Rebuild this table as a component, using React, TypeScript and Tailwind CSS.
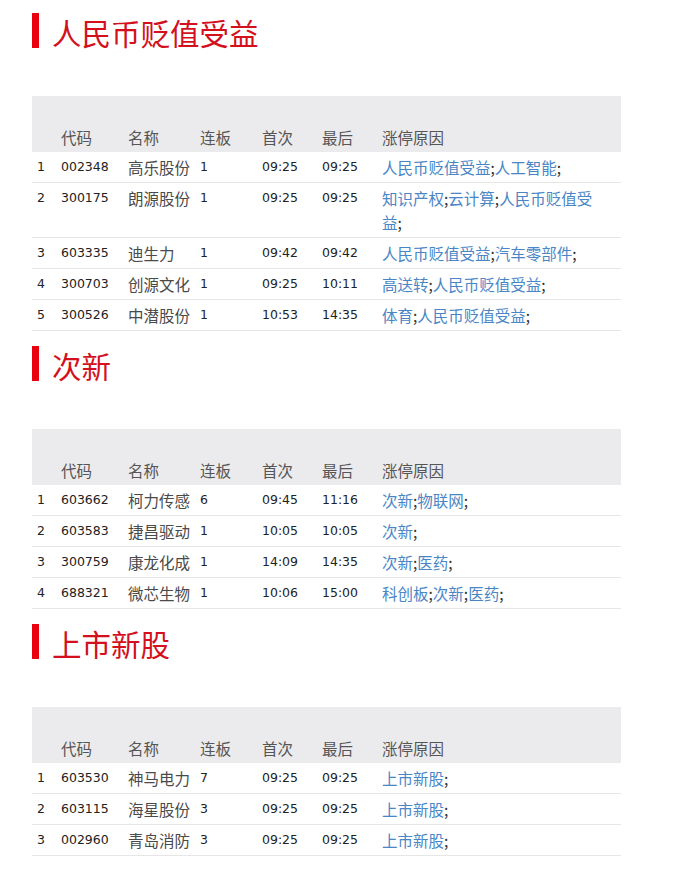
import React from "react";

type Row = {
  idx: string;
  code: string;
  name: string;
  lb: string;
  first: string;
  last: string;
  reasons: string[][];
};

const sections: { title: string; rows: Row[] }[] = [
  {
    title: "人民币贬值受益",
    rows: [
      { idx: "1", code: "002348", name: "高乐股份", lb: "1", first: "09:25", last: "09:25", reasons: [["人民币贬值受益", "人工智能"]] },
      { idx: "2", code: "300175", name: "朗源股份", lb: "1", first: "09:25", last: "09:25", reasons: [["知识产权", "云计算", "人民币贬值受|益"]] },
      { idx: "3", code: "603335", name: "迪生力", lb: "1", first: "09:42", last: "09:42", reasons: [["人民币贬值受益", "汽车零部件"]] },
      { idx: "4", code: "300703", name: "创源文化", lb: "1", first: "09:25", last: "10:11", reasons: [["高送转", "人民币贬值受益"]] },
      { idx: "5", code: "300526", name: "中潜股份", lb: "1", first: "10:53", last: "14:35", reasons: [["体育", "人民币贬值受益"]] },
    ],
  },
  {
    title: "次新",
    rows: [
      { idx: "1", code: "603662", name: "柯力传感", lb: "6", first: "09:45", last: "11:16", reasons: [["次新", "物联网"]] },
      { idx: "2", code: "603583", name: "捷昌驱动", lb: "1", first: "10:05", last: "10:05", reasons: [["次新"]] },
      { idx: "3", code: "300759", name: "康龙化成", lb: "1", first: "14:09", last: "14:35", reasons: [["次新", "医药"]] },
      { idx: "4", code: "688321", name: "微芯生物", lb: "1", first: "10:06", last: "15:00", reasons: [["科创板", "次新", "医药"]] },
    ],
  },
  {
    title: "上市新股",
    rows: [
      { idx: "1", code: "603530", name: "神马电力", lb: "7", first: "09:25", last: "09:25", reasons: [["上市新股"]] },
      { idx: "2", code: "603115", name: "海星股份", lb: "3", first: "09:25", last: "09:25", reasons: [["上市新股"]] },
      { idx: "3", code: "002960", name: "青岛消防", lb: "3", first: "09:25", last: "09:25", reasons: [["上市新股"]] },
    ],
  },
];

const grid = "grid grid-cols-[24px_67px_72px_62px_60px_60px_1fr]";
const num = "font-['DejaVu_Sans',sans-serif] text-[12.5px] text-[#222] leading-[24px] h-[24px]";
const cjk = "font-['Noto_Sans_CJK_SC',sans-serif] text-[15.5px] leading-[24px]";

function Reason({ items }: { items: string[] }) {
  const out: React.ReactNode[] = [];
  items.forEach((it, i) => {
    if (it.includes("|")) {
      const [a, b] = it.split("|");
      out.push(
        <span key={i + "a"} className="text-[#4a86c6]">
          {a}
        </span>
      );
      out.push(<br key={i + "br"} />);
      out.push(
        <span key={i + "b"} className="text-[#4a86c6]">
          {b}
        </span>
      );
    } else {
      out.push(
        <span key={i} className="text-[#4a86c6]">
          {it}
        </span>
      );
    }
    out.push(
      <span key={i + "s"} className="text-[#333]">
        ;
      </span>
    );
  });
  return <>{out}</>;
}

function Section({ title, rows, first }: { title: string; rows: Row[]; first?: boolean }) {
  return (
    <div className={first ? "pt-[13px]" : "pt-[15px]"}>
      <div className="flex items-center h-[35px]">
        <div className="w-[7px] h-[35px] bg-[#e8000e]" />
        <div className="ml-[13px] font-['Noto_Sans_CJK_SC',serif] text-[29.5px] leading-[35px] text-[#d3101c] pt-[4px]">
          {title}
        </div>
      </div>
      <div className="mt-[48px] w-[589px]">
        <div className={`${grid} bg-[#ebebed] h-[56px] items-end pb-[3px]`}>
          {["", "代码", "名称", "连板", "首次", "最后", "涨停原因"].map((h, i) => (
            <div key={i} className={`pl-[5px] ${cjk} text-[#555]`}>
              {h}
            </div>
          ))}
        </div>
        {rows.map((r) => (
          <div key={r.idx} className={`${grid} border-b border-[#e6e6e6] py-[3px] items-start`}>
            <div className={`pl-[5px] ${num}`}>{r.idx}</div>
            <div className={`pl-[5px] ${num}`}>{r.code}</div>
            <div className={`pl-[5px] ${cjk} text-[#4a4a4a] whitespace-nowrap h-[24px]`}>{r.name}</div>
            <div className={`pl-[5px] ${num}`}>{r.lb}</div>
            <div className={`pl-[5px] ${num}`}>{r.first}</div>
            <div className={`pl-[5px] ${num}`}>{r.last}</div>
            <div className={`pl-[5px] ${cjk}`}>
              {r.reasons.map((line, i) => (
                <Reason key={i} items={line} />
              ))}
            </div>
          </div>
        ))}
      </div>
    </div>
  );
}

export default function App() {
  return (
    <div className="w-[685px] min-h-[869px] bg-white pl-[32px] overflow-hidden">
      {sections.map((s, i) => (
        <Section key={s.title} title={s.title} rows={s.rows} first={i === 0} />
      ))}
    </div>
  );
}
